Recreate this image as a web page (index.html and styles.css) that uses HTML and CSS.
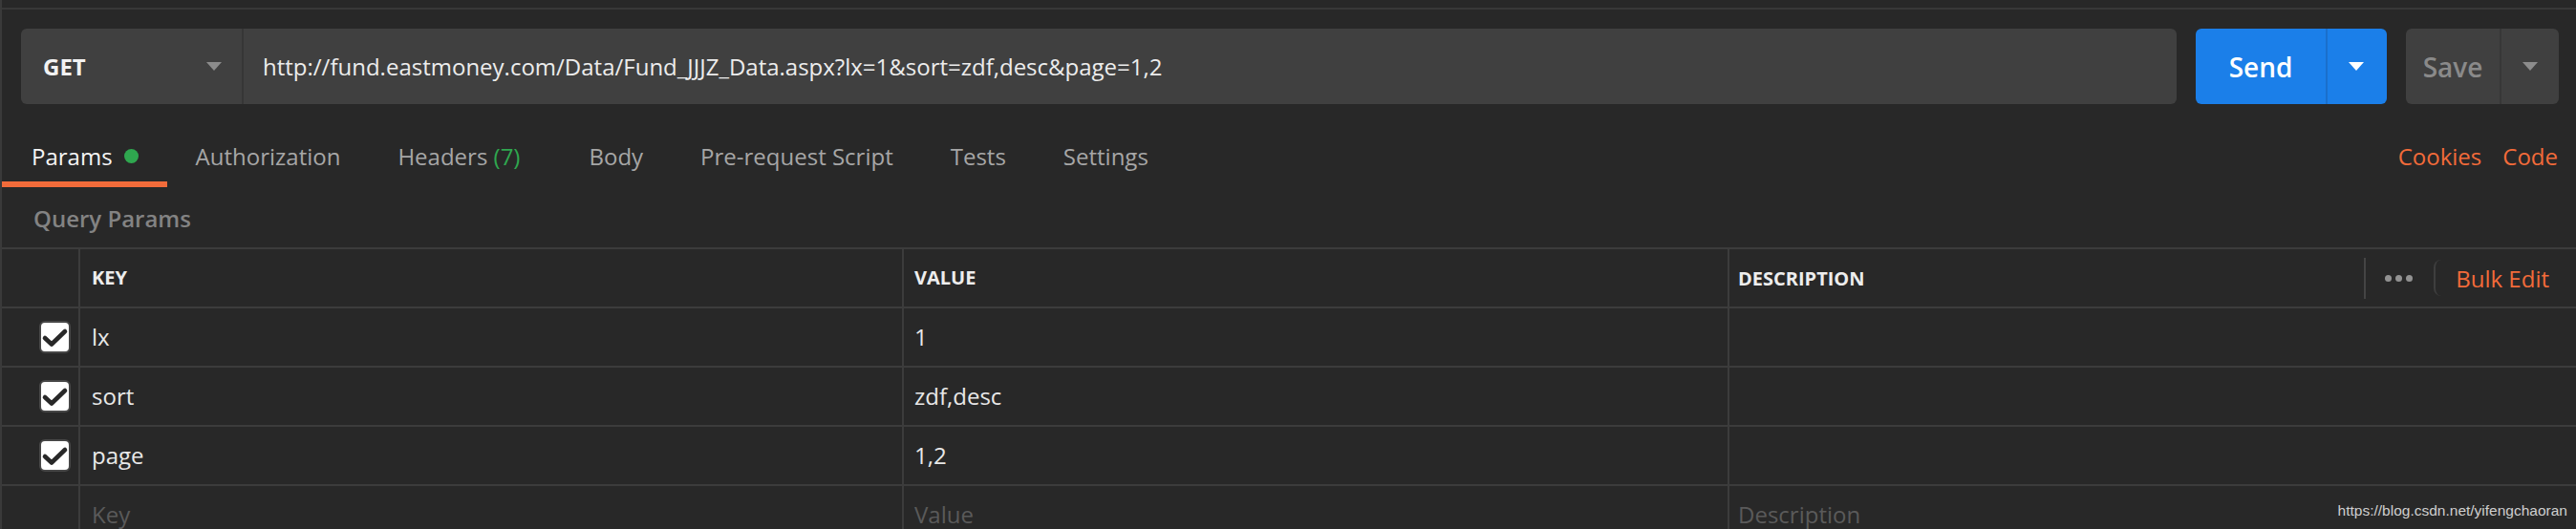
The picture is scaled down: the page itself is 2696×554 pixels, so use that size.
FILE: index.html
```html
<!DOCTYPE html>
<html>
<head>
<meta charset="utf-8">
<title>Postman</title>
<link rel="stylesheet" href="styles.css">
</head>
<body>
<div class="topbar"></div>
<div class="urlrow">
  <div class="urlbox">
    <div class="method"><span>GET</span><i class="caret caret-gray"></i></div>
    <div class="url">http://fund.eastmoney.com/Data/Fund_JJJZ_Data.aspx?lx=1&amp;sort=zdf,desc&amp;page=1,2</div>
  </div>
  <div class="btn send"><span class="btn-main">Send</span><span class="btn-drop"><i class="caret caret-white"></i></span></div>
  <div class="btn save"><span class="btn-main">Save</span><span class="btn-drop"><i class="caret caret-gray"></i></span></div>
</div>
<div class="tabbar">
  <div class="tabs">
    <div class="tab active">Params<span class="dot"></span></div>
    <div class="tab">Authorization</div>
    <div class="tab tab-headers">Headers <span class="count">(7)</span></div>
    <div class="tab">Body</div>
    <div class="tab">Pre-request Script</div>
    <div class="tab">Tests</div>
    <div class="tab">Settings</div>
  </div>
  <div class="links"><span>Cookies</span><span>Code</span></div>
</div>
<div class="section-title">Query Params</div>
<div class="table">
  <div class="row head">
    <div class="cell chk"></div>
    <div class="cell">KEY</div>
    <div class="cell">VALUE</div>
    <div class="cell desc">
      <span>DESCRIPTION</span>
      <div class="actions">
        <span class="vsep"></span>
        <span class="dots"><i></i><i></i><i></i></span>
        <span class="bulk">Bulk Edit</span>
      </div>
    </div>
  </div>
  <div class="row">
    <div class="cell chk"><span class="checkbox"><svg viewBox="0 0 33 33" width="33" height="33"><path d="M6 17 L13 23.5 L27 10" fill="none" stroke="#282828" stroke-width="4.6" stroke-linecap="round" stroke-linejoin="round"/></svg></span></div>
    <div class="cell">lx</div>
    <div class="cell">1</div>
    <div class="cell desc"></div>
  </div>
  <div class="row">
    <div class="cell chk"><span class="checkbox"><svg viewBox="0 0 33 33" width="33" height="33"><path d="M6 17 L13 23.5 L27 10" fill="none" stroke="#282828" stroke-width="4.6" stroke-linecap="round" stroke-linejoin="round"/></svg></span></div>
    <div class="cell">sort</div>
    <div class="cell">zdf,desc</div>
    <div class="cell desc"></div>
  </div>
  <div class="row">
    <div class="cell chk"><span class="checkbox"><svg viewBox="0 0 33 33" width="33" height="33"><path d="M6 17 L13 23.5 L27 10" fill="none" stroke="#282828" stroke-width="4.6" stroke-linecap="round" stroke-linejoin="round"/></svg></span></div>
    <div class="cell">page</div>
    <div class="cell">1,2</div>
    <div class="cell desc"></div>
  </div>
  <div class="row">
    <div class="cell chk"></div>
    <div class="cell placeholder">Key</div>
    <div class="cell placeholder">Value</div>
    <div class="cell desc placeholder">Description</div>
  </div>
</div>
<div class="watermark">https://blog.csdn.net/yifengchaoran</div>
</body>
</html>
```

FILE: styles.css
```css
* { box-sizing: border-box; }
html, body { margin: 0; padding: 0; }
body {
  width: 2696px;
  height: 554px;
  overflow: hidden;
  background: #282828;
  border-left: 2px solid #3a3a3a;
  font-family: "Open Sans", "DejaVu Sans", sans-serif;
  color: #e6e6e6;
  position: relative;
}
.topbar {
  height: 10px;
  border-bottom: 2px solid #383838;
}
.urlrow {
  display: flex;
  margin-top: 20px;
  padding: 0 18px 0 20px;
  height: 79px;
}
.urlbox {
  flex: 1;
  display: flex;
  background: #404040;
  border-radius: 6px;
}
.method {
  width: 233px;
  border-right: 2px solid #363636;
  display: flex;
  align-items: center;
  justify-content: space-between;
  padding: 0 21px 0 23px;
  font-size: 24px;
  font-weight: 700;
  color: #f2f2f2;
}
.caret {
  display: block;
  width: 0;
  height: 0;
  border-left: 8px solid transparent;
  border-right: 8px solid transparent;
  border-top: 9px solid #8c8c8c;
}
.caret-white { border-top-color: #ffffff; }
.url {
  flex: 1;
  display: flex;
  align-items: center;
  padding-left: 20px;
  font-size: 24px;
  color: #ececec;
  white-space: nowrap;
}
.btn {
  display: flex;
  border-radius: 6px;
  margin-left: 20px;
  font-size: 28px;
  font-weight: 600;
}
.btn-main {
  display: flex;
  align-items: center;
  justify-content: center;
}
.btn-drop {
  width: 60px;
  display: flex;
  align-items: center;
  justify-content: center;
}
.send {
  width: 200px;
  background: #1b7fe9;
  color: #ffffff;
}
.send .btn-main { width: 138px; border-right: 2px solid #1a6fcc; }
.save {
  width: 160px;
  background: #404040;
  color: #8a8a8a;
}
.save .btn-main { width: 100px; border-right: 2px solid #373737; }
.tabbar {
  display: flex;
  justify-content: space-between;
  margin-top: 27px;
  height: 60px;
}
.tabs { display: flex; }
.tab {
  height: 60px;
  padding: 0 30px;
  display: flex;
  align-items: center;
  border-bottom: 6px solid transparent;
  font-size: 24px;
  color: #a6a6a6;
  white-space: pre;
}
.tab-headers { margin-right: 12px; }
.tab.active {
  color: #f5f5f5;
  border-bottom-color: #f26b3a;
  padding-left: 31px;
}
.dot {
  width: 15px;
  height: 15px;
  border-radius: 50%;
  background: #2fa74f;
  margin-left: 12px;
}
.count { color: #2fa74f; }
.links {
  display: flex;
  gap: 22px;
  padding: 0 19px 6px 0;
  align-items: center;
  font-size: 24px;
  color: #f26b3a;
}
.section-title {
  margin-top: 16px;
  height: 34px;
  line-height: 34px;
  padding-left: 33px;
  font-size: 24px;
  font-weight: 600;
  color: #838383;
}
.table {
  margin-top: 13px;
  border-top: 2px solid #3c3c3c;
}
.row {
  display: grid;
  grid-template-columns: 82px 862px 864px 1fr;
  height: 62px;
  border-bottom: 2px solid #3c3c3c;
}
.cell {
  border-right: 2px solid #3c3c3c;
  display: flex;
  align-items: center;
  padding-left: 12px;
  padding-bottom: 2px;
  font-size: 24px;
  color: #e8e8e8;
  white-space: nowrap;
}
.cell.desc { border-right: none; padding-left: 9px; }
.row .cell:nth-child(3) { padding-left: 11px; }
.head .cell {
  font-size: 20px;
  font-weight: 700;
  color: #ededed;
}
.cell.chk {
  justify-content: flex-end;
  padding: 0 8px 0 0;
}
.checkbox {
  width: 33px;
  height: 34px;
  background: #ffffff;
  border: 2px solid #474747;
  border-radius: 6px;
  display: flex;
  align-items: center;
  justify-content: center;
}
.checkbox svg { display: block; flex: none; }
.placeholder { color: #5a5a5a; }
.head .desc { justify-content: space-between; padding-bottom: 0; }
.actions {
  display: flex;
  align-items: center;
  height: 100%;
}
.vsep {
  width: 2px;
  height: 43px;
  background: #444444;
  margin-right: 20px;
}
.dots { display: flex; gap: 4px; margin-right: 22px; }
.dots i {
  display: block;
  width: 7px;
  height: 7px;
  border-radius: 50%;
  background: #929292;
}
.bulk {
  display: flex;
  align-items: center;
  height: 38px;
  padding: 0 28px 0 21px;
  border-left: 2px solid #3e3e3e;
  border-radius: 8px 0 0 8px;
  font-size: 24px;
  font-weight: 400;
  color: #f26b3a;
}
.watermark {
  position: absolute;
  right: 9px;
  top: 525px;
  font-family: "Liberation Sans", Arial, sans-serif;
  font-size: 15.5px;
  line-height: 20px;
  color: #cfcfcf;
}
```
